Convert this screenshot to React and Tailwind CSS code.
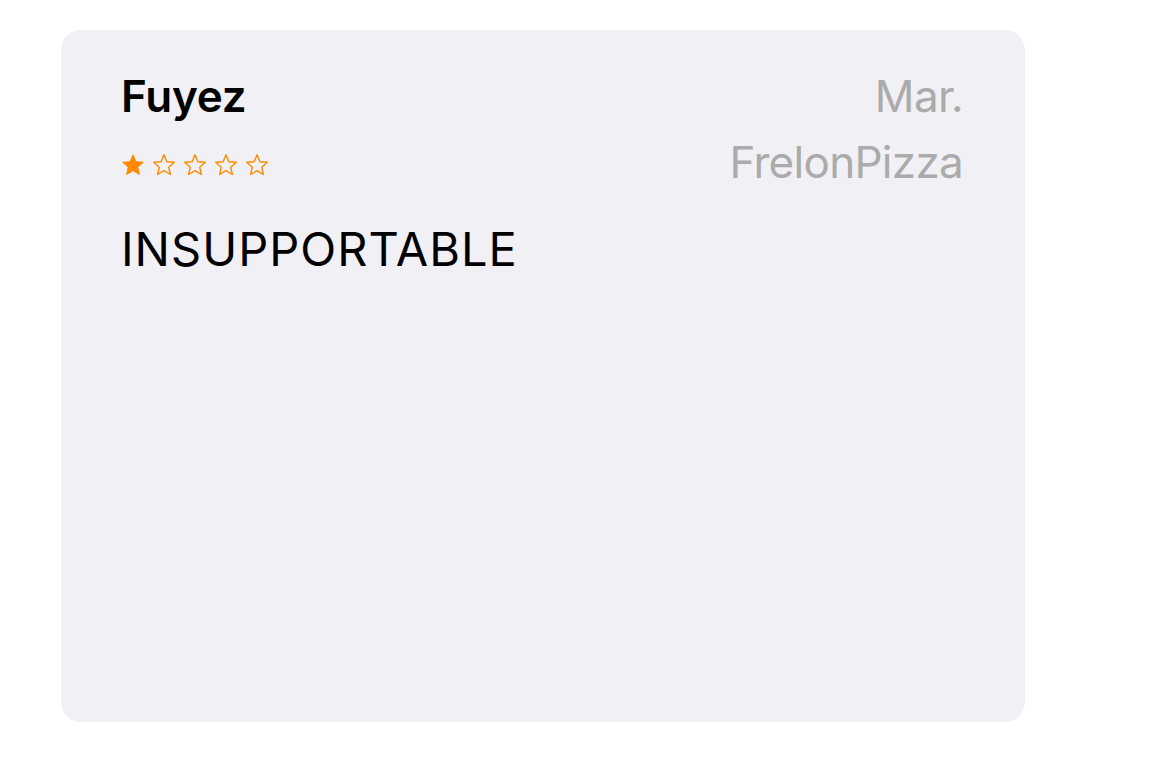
import React from "react";

/* ---------- helpers ---------- */
const STAR_PATH =
  "M12 1.8l2.9 6.9 7.4.6-5.6 4.9 1.7 7.3L12 17.6l-6.4 3.9 1.7-7.3L1.7 9.3l7.4-.6z";

function Star({ filled }) {
  return (
    <svg width="24" height="23" viewBox="0 0 24 23" className="shrink-0">
      <path
        d={STAR_PATH}
        fill={filled ? "#ff8a00" : "none"}
        stroke="#ff8a00"
        strokeWidth={filled ? 1 : 1.4}
        strokeLinejoin="round"
      />
    </svg>
  );
}

function Rating({ value = 1, max = 5 }) {
  return (
    <div className="flex items-center gap-[7px] pt-[5px]">
      {Array.from({ length: max }, (_, i) => (
        <Star key={i} filled={i < value} />
      ))}
    </div>
  );
}

/* ---------- main ---------- */
export default function App() {
  return (
    <div
      className="min-h-screen w-full bg-white pt-[30px] pl-[61px]"
      style={{ fontFamily: "Inter, 'Noto Sans', sans-serif" }}
    >
      <div className="w-[964px] h-[692px] rounded-[20px] bg-[#f1f0f5] px-[60px] pt-[33px]">
        <div className="flex justify-between">
          <div className="flex flex-col">
            <div className="h-[66px] text-[44px] leading-[66px] font-semibold text-black tracking-[-0.2px]">
              Fuyez
            </div>
            <div className="h-[66px] flex items-center">
              <Rating value={1} />
            </div>
          </div>
          <div className="flex flex-col items-end mr-[2px] text-[#ababab] text-[44px] leading-[66px] tracking-[-0.7px]">
            <div>Mar.</div>
            <div>FrelonPizza</div>
          </div>
        </div>
        <div className="mt-[26px] text-[47px] leading-[1.2] tracking-[1px] text-black">
          INSUPPORTABLE
        </div>
      </div>
    </div>
  );
}
